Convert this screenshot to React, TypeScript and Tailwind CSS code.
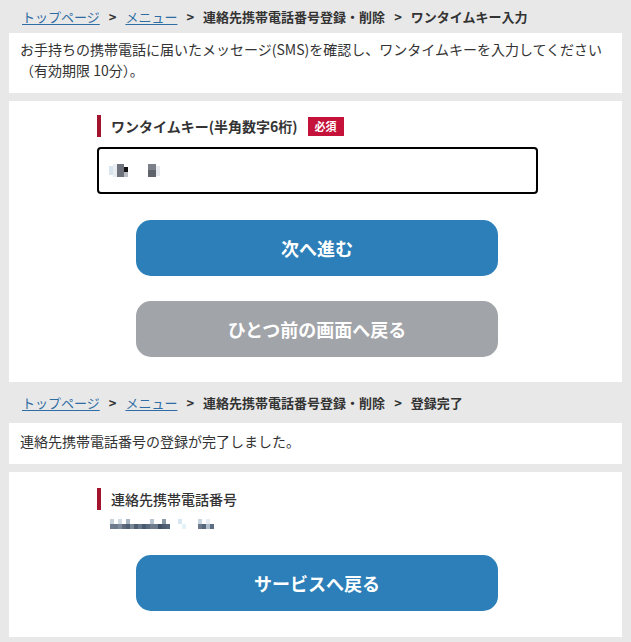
import React from 'react';

const Crumbs = ({ current }: { current: string }) => (
	<div className="flex items-center gap-[9px] pl-[13px] text-[13px] font-bold text-[#333]">
		<a className="font-normal text-[#2e6da4] underline underline-offset-2">トップページ</a>
		<span>&gt;</span>
		<a className="font-normal text-[#2e6da4] underline underline-offset-2">メニュー</a>
		<span>&gt;</span>
		<span>連絡先携帯電話番号登録・削除</span>
		<span>&gt;</span>
		<span>{current}</span>
	</div>
);

const Label = ({ text, required }: { text: string; required?: boolean }) => (
	<div className="flex items-center">
		<div
			className={
				'flex h-[22px] items-center border-l-4 border-[#a3152f] pl-[10px] text-[14px] text-[#333] ' +
				(required ? 'font-bold' : 'font-medium')
			}
		>
			{text}
		</div>
		{required && (
			<span className="ml-[10px] flex h-[19px] w-[36px] items-center justify-center bg-[#c4123a] text-[11px] font-bold text-white">
				必須
			</span>
		)}
	</div>
);

const Btn = ({ text, gray }: { text: string; gray?: boolean }) => (
	<button
		className={
			'ml-[127px] flex h-[56px] w-[362px] items-center justify-center rounded-[15px] text-[18px] font-bold text-white ' +
			(gray ? 'bg-[#a1a4a8]' : 'bg-[#2c7fb8]')
		}
	>
		{text}
	</button>
);

// pixelated (redacted) values
const KeyBlur = () => (
	<svg width="60" height="14" viewBox="0 0 60 14">
		<rect x="0" y="2" width="4" height="9" fill="#d8e4ee" />
		<rect x="4" y="0" width="4" height="13" fill="#e9eef3" />
		<rect x="8" y="0" width="7" height="13" fill="#6e727c" />
		<rect x="15" y="3" width="4" height="5" fill="#111" />
		<rect x="15" y="8" width="4" height="5" fill="#b9bcc2" />
		<rect x="39" y="0" width="8" height="6" fill="#7c808a" />
		<rect x="39" y="6" width="8" height="7" fill="#5f636c" />
		<rect x="47" y="2" width="4" height="10" fill="#e6eaee" />
	</svg>
);

const TelBlur = () => (
	<svg width="104" height="10" viewBox="0 0 104 10">
		{[
			[0, '#c9d1da', 0],
			[4, '#6c7a8c', 5],
			[8, '#d1dbe4', 0],
			[12, '#5d6b7d', 5],
			[16, '#a8b6c4', 0],
			[20, '#7a8797', 5],
			[24, '#4f5f72', 5],
			[28, '#66768a', 5],
			[32, '#4a5a6e', 5],
			[36, '#5a6a7e', 5],
			[40, '#b7c4d1', 0],
			[44, '#6a798c', 5],
			[48, '#3f5065', 5],
			[52, '#8a98a8', 0],
			[56, '#53637a', 5],
			[68, '#d7e6f0', 0],
			[72, '#e3f1f8', 5],
			[88, '#c8d6e2', 0],
			[92, '#56667b', 5],
			[96, '#e6eef4', 0],
			[100, '#5e6e82', 5],
		].map(([x, c, y], i) => (
			<rect key={i} x={x as number} y={y as number} width="4" height="5" fill={c as string} />
		))}
		{[
			[0, '#6e7c8e'],
			[8, '#7d8b9c'],
			[16, '#4f5e70'],
			[40, '#6d7b8c'],
			[52, '#4c5b6e'],
			[88, '#6a788a'],
			[96, '#b0bdca'],
		].map(([x, c], i) => (
			<rect key={'b' + i} x={x as number} y="5" width="4" height="5" fill={c as string} />
		))}
	</svg>
);

const App = () => {
	return (
		<div className="flex min-h-[642px] w-[631px] flex-col bg-[#e8e8e8] px-[9px] pb-[5px] font-['Noto_Sans_CJK_JP','Noto_Sans',sans-serif] text-[#333]">
			<div className="flex h-[33px] items-center">
				<Crumbs current="ワンタイムキー入力" />
			</div>
			<div className="h-[60px] bg-white px-[11px] pt-[6px] text-[14px] leading-[21px]">
				お手持ちの携帯電話に届いたメッセージ(SMS)を確認し、ワンタイムキーを入力してください
				<br />
				（有効期限 10分）。
			</div>
			<div className="mt-[8px] flex flex-col bg-white pt-[14px] pb-[25px]">
				<div className="ml-[88px]">
					<Label text="ワンタイムキー(半角数字6桁)" required />
				</div>
				<div className="ml-[88px] mt-[10px] flex h-[47px] w-[441px] items-center rounded-[4px] border-2 border-black pl-[10px]">
					<KeyBlur />
				</div>
				<div className="mt-[26px]">
					<Btn text="次へ進む" />
				</div>
				<div className="mt-[25px]">
					<Btn text="ひとつ前の画面へ戻る" gray />
				</div>
			</div>
			<div className="flex h-[41px] items-center">
				<Crumbs current="登録完了" />
			</div>
			<div className="flex h-[41px] items-center bg-white px-[11px] pb-[4px] text-[14px]">
				連絡先携帯電話番号の登録が完了しました。
			</div>
			<div className="mt-[8px] flex flex-col bg-white pt-[16px] pb-[26px]">
				<div className="ml-[88px]">
					<Label text="連絡先携帯電話番号" />
				</div>
				<div className="ml-[101px] mt-[9px] flex">
					<TelBlur />
				</div>
				<div className="mt-[26px]">
					<Btn text="サービスへ戻る" />
				</div>
			</div>
		</div>
	);
};

export default App;
